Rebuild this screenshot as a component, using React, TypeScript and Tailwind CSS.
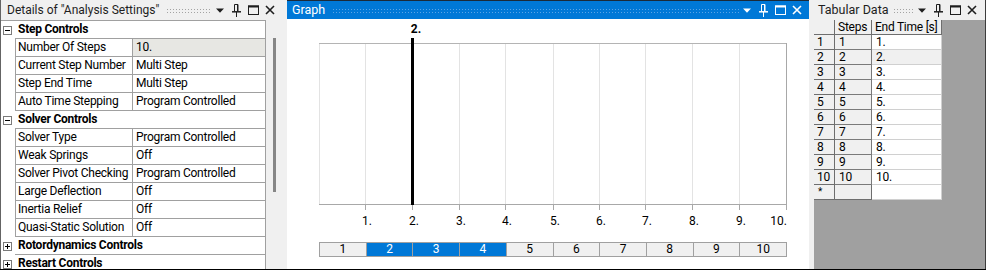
import React from 'react';

type GroupRow = { kind: 'group'; label: string; open: boolean };
type PropRow = { kind: 'prop'; name: string; value: string; shaded?: boolean };

const detailRows: (GroupRow | PropRow)[] = [
    { kind: 'group', label: 'Step Controls', open: true },
    { kind: 'prop', name: 'Number Of Steps', value: '10.', shaded: true },
    { kind: 'prop', name: 'Current Step Number', value: 'Multi Step' },
    { kind: 'prop', name: 'Step End Time', value: 'Multi Step' },
    { kind: 'prop', name: 'Auto Time Stepping', value: 'Program Controlled' },
    { kind: 'group', label: 'Solver Controls', open: true },
    { kind: 'prop', name: 'Solver Type', value: 'Program Controlled' },
    { kind: 'prop', name: 'Weak Springs', value: 'Off' },
    { kind: 'prop', name: 'Solver Pivot Checking', value: 'Program Controlled' },
    { kind: 'prop', name: 'Large Deflection', value: 'Off' },
    { kind: 'prop', name: 'Inertia Relief', value: 'Off' },
    { kind: 'prop', name: 'Quasi-Static Solution', value: 'Off' },
    { kind: 'group', label: 'Rotordynamics Controls', open: false },
    { kind: 'group', label: 'Restart Controls', open: false },
];

// pixel columns of the time axis ticks, relative to the graph panel
const tickX = [32, 78, 125, 172, 218, 266, 312, 358, 405, 452, 499];

function Caret() {
    return (
        <svg width="8" height="5" viewBox="0 0 8 5">
            <path d="M0 0.5H8L4 4.8Z" fill="currentColor" />
        </svg>
    );
}

function Pin() {
    return (
        <svg width="9" height="13" viewBox="0 0 9 13" fill="none" stroke="currentColor">
            <path d="M2.5 0.5H6V7.5M2.5 0.5V7.5" />
            <path d="M5.5 0.5V7.5" />
            <path d="M0 7.8H9" strokeWidth="1.5" />
            <path d="M4.5 8V13" />
        </svg>
    );
}

function MaxBox() {
    return (
        <svg width="11" height="10" viewBox="0 0 11 10" fill="none" stroke="currentColor">
            <rect x="0.5" y="1" width="10" height="8.5" />
            <path d="M0 1.5H11" strokeWidth="2" />
        </svg>
    );
}

function CloseX() {
    return (
        <svg width="10" height="10" viewBox="0 0 10 10" fill="none" stroke="currentColor">
            <path d="M1 1L9 9M9 1L1 9" strokeWidth="1.6" />
        </svg>
    );
}

function HeaderIcons({ light }: { light?: boolean }) {
    return (
        <div className={`flex h-full items-center ${light ? 'text-white' : 'text-[#1e1e1e]'}`}>
            <span className="flex w-[16.5px] justify-center"><Caret /></span>
            <span className="flex w-[16.5px] justify-center"><Pin /></span>
            <span className="flex w-[16.5px] justify-center"><MaxBox /></span>
            <span className="flex w-[16.5px] justify-center"><CloseX /></span>
        </div>
    );
}

function Expander({ open }: { open: boolean }) {
    return (
        <svg width="9" height="9" viewBox="0 0 9 9" fill="none">
            <rect x="0.5" y="0.5" width="8" height="8" stroke="#7a7a7a" fill="#fff" />
            <path d="M2 4.5H7" stroke="#000" />
            {!open && <path d="M4.5 2V7" stroke="#000" />}
        </svg>
    );
}

function DetailsPanel() {
    return (
        <section className="flex w-[286px] shrink-0 flex-col border-l border-[#646464] bg-[#f0f0f0]">
            <header className="flex h-[20px] items-center pl-[6px] pr-[8px] text-[12px] text-[#1e1e1e]">
                <span className="whitespace-nowrap">Details of "Analysis Settings"</span>
                <div className="ml-[7px] h-[5px] flex-1 bg-[radial-gradient(circle,#a3a3a3_0.8px,transparent_1px)] bg-[length:3px_3px]" />
                <HeaderIcons />
            </header>
            <div className="flex min-h-0 flex-1">
                <div className="w-[265px] overflow-hidden border-t border-[#a0a0a0] bg-white tracking-[-0.25px]">
                    {detailRows.map((row) =>
                        row.kind === 'group' ? (
                            <div key={row.label} className="flex h-[18px]">
                                <div className="flex w-[14px] items-center pl-[2px]">
                                    <Expander open={row.open} />
                                </div>
                                <div className="flex-1 border-b border-r border-[#a0a0a0] pl-[3px] font-bold leading-[17px] whitespace-nowrap">
                                    {row.label}
                                </div>
                            </div>
                        ) : (
                            <div key={row.name} className="flex h-[18px]">
                                <div className="w-[14px]" />
                                <div className="w-[118px] overflow-hidden border-b border-l border-r border-[#a0a0a0] pl-[2px] leading-[17px] whitespace-nowrap">
                                    {row.name}
                                </div>
                                <div
                                    className={`flex-1 border-b border-r border-[#a0a0a0] pl-[3px] leading-[17px] whitespace-nowrap ${
                                        row.shaded ? 'bg-[#e7e7e3]' : ''
                                    }`}
                                >
                                    {row.value}
                                </div>
                            </div>
                        )
                    )}
                </div>
                <div className="w-[20px] pt-[18px]">
                    <div className="ml-[7px] h-[154px] w-[3px] bg-[#868686]" />
                </div>
            </div>
        </section>
    );
}

function GraphPanel() {
    return (
        <section className="ml-[1px] flex w-[522px] shrink-0 flex-col bg-white">
            <header className="flex h-[19px] items-center border-t border-[#1c2a38] bg-[#0078d7] pl-[5px] pr-[4px] text-[12.5px] text-white">
                <span>Graph</span>
                <div className="ml-[7px] h-[5px] flex-1 bg-[radial-gradient(circle,#5aa3e6_0.8px,transparent_1px)] bg-[length:3px_3px]" />
                <HeaderIcons light />
            </header>
            <svg width="522" height="223" className="block shrink-0">
                <text x="129" y="14" textAnchor="middle" fontSize="12" fontWeight="700" fill="#000">
                    2.
                </text>
                {tickX.slice(0, 10).map((x) => (
                    <line key={`g${x}`} x1={x + 0.5} x2={x + 0.5} y1={24} y2={185} stroke="#e3e3e3" />
                ))}
                <line x1={32} x2={500} y1={24.5} y2={24.5} stroke="#b4b4b4" />
                <line x1={499.5} x2={499.5} y1={24} y2={191} stroke="#a8a8a8" />
                <line x1={32} x2={500} y1={185.5} y2={185.5} stroke="#a8a8a8" />
                {tickX.slice(1).map((x) => (
                    <line key={`t${x}`} x1={x + 0.5} x2={x + 0.5} y1={185} y2={191} stroke="#a8a8a8" />
                ))}
                <rect x={124} y={19} width={3} height={167} fill="#000" />
                {tickX.slice(1).map((x, i) => (
                    <text
                        key={`l${x}`}
                        x={i === 9 ? 500 : x + 2}
                        y={206}
                        textAnchor={i === 9 ? 'end' : 'middle'}
                        fontSize="12"
                        fill="#000"
                    >
                        {i + 1}.
                    </text>
                ))}
            </svg>
            <div className="pl-[32px]">
                <div className="grid h-[15px] w-[468px] grid-cols-10 border-y border-l border-[#a0a0a0] text-[12px] leading-[13px]">
                    {[1, 2, 3, 4, 5, 6, 7, 8, 9, 10].map((n) => (
                        <div
                            key={n}
                            className={`border-r border-[#a0a0a0] text-center ${
                                n >= 2 && n <= 4 ? 'bg-[#0078d7] text-white' : 'bg-[#f0f0f0] text-black'
                            }`}
                        >
                            {n}
                        </div>
                    ))}
                </div>
            </div>
        </section>
    );
}

function TabularPanel() {
    const rows = [1, 2, 3, 4, 5, 6, 7, 8, 9, 10];
    return (
        <section className="ml-[5px] flex w-[172px] shrink-0 flex-col border-r border-[#3c3c3c] bg-[#a0a0a0]">
            <header className="flex h-[20px] items-center bg-[#f0f0f0] pl-[4px] pr-[5px] text-[12.5px] text-[#1e1e1e]">
                <span className="whitespace-nowrap">Tabular Data</span>
                <div className="ml-[4px] h-[5px] flex-1 bg-[radial-gradient(circle,#a3a3a3_0.8px,transparent_1px)] bg-[length:3px_3px]" />
                <HeaderIcons />
            </header>
            <div className="w-[128px] text-[12px] leading-[14px] tracking-[-0.25px]">
                <div className="flex h-[15px]">
                    <div className="w-[21px] border-b border-r border-[#6e6e6e] bg-[#f0f0f0]" />
                    <div className="w-[37px] border-b border-r border-[#6e6e6e] bg-[#f0f0f0] pl-[3px]">Steps</div>
                    <div className="w-[70px] border-b border-r border-[#6e6e6e] bg-[#f0f0f0] pl-[3px] whitespace-nowrap">End Time [s]</div>
                </div>
                {rows.map((n) => (
                    <div key={n} className="flex h-[15px]">
                        <div className="w-[21px] border-b border-r border-[#6e6e6e] bg-[#f0f0f0] pl-[3px]">{n}</div>
                        <div className="w-[37px] border-b border-r border-[#7a7a7a] bg-[#f0f0f0] pl-[4px]">{n}</div>
                        <div
                            className={`w-[70px] border-b border-r border-[#d0d0d0] pl-[4px] ${
                                n === 2 ? 'bg-[#f0f0f0]' : 'bg-white'
                            }`}
                        >
                            {n}.
                        </div>
                    </div>
                ))}
                <div className="flex h-[15px]">
                    <div className="w-[21px] border-b border-r border-[#6e6e6e] bg-[#f0f0f0] pl-[4px] text-[10px] leading-[14px]">*</div>
                    <div className="w-[37px] border-b border-r border-[#6e6e6e] bg-[#f0f0f0]" />
                    <div className="w-[70px] border-b border-r border-[#d0d0d0] bg-white" />
                </div>
            </div>
        </section>
    );
}

export default function App() {
    return (
        <div className="flex h-[270px] w-[986px] overflow-hidden border-b border-black bg-[#f0f0f0] font-['Roboto','Liberation_Sans',sans-serif] text-[12px] text-black">
            <DetailsPanel />
            <GraphPanel />
            <TabularPanel />
        </div>
    );
}
